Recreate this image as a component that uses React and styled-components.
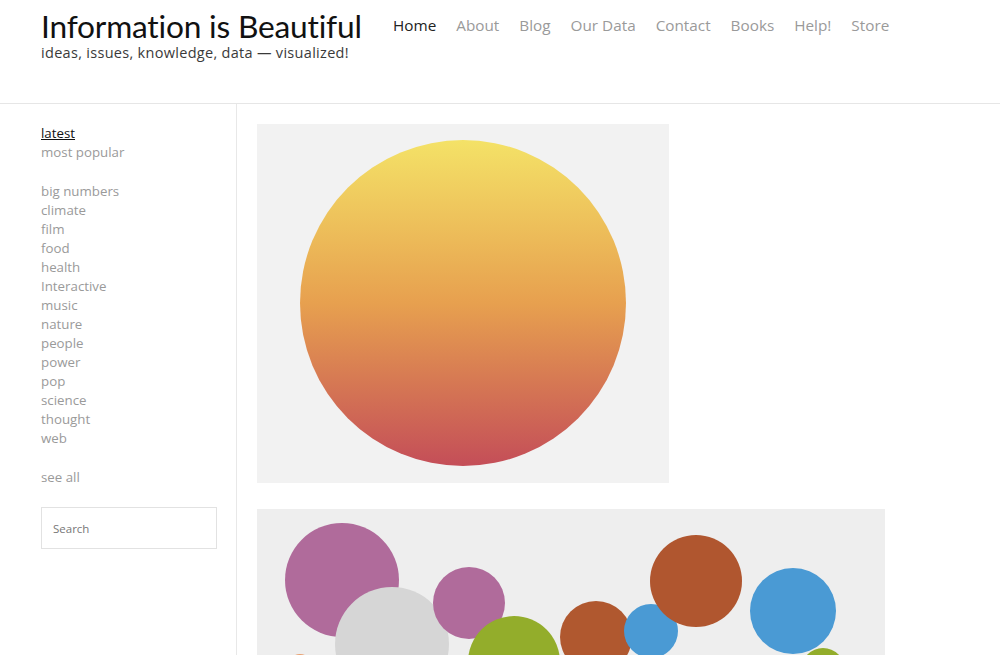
import React from "react";
import styled, { createGlobalStyle } from "styled-components";

const GlobalStyle = createGlobalStyle`
  body {
    margin: 0;
    background: #fff;
    font-family: Lato, "Open Sans", sans-serif;
  }
`;

const Page = styled.div`
  width: 1000px;
  height: 655px;
  overflow: hidden;
`;

const Header = styled.header`
  height: 104px;
  border-bottom: 1px solid #e6e6e6;
  display: flex;
  align-items: flex-start;
  padding-left: 41px;
  box-sizing: border-box;
`;

const Brand = styled.div`
  padding-top: 8px;
  width: 352px;
`;

const Title = styled.h1`
  margin: 0;
  font-family: Lato, sans-serif;
  font-weight: 400;
  font-size: 31.7px;
  line-height: 36px;
  letter-spacing: -0.2px;
  color: #111;
`;

const Tagline = styled.div`
  font-family: "Open Sans", sans-serif;
  font-size: 14.5px;
  line-height: 18px;
  color: #3a3a3a;
  letter-spacing: 0.3px;
`;

const Nav = styled.nav`
  display: flex;
  gap: 20px;
  padding-top: 14px;
`;

const NavLink = styled.a`
  font-family: "Open Sans", sans-serif;
  font-size: 15.3px;
  line-height: 22px;
  color: ${(p) => (p.$active ? "#222" : "#9a9a9a")};
  text-decoration: none;
`;

const Body = styled.div`
  display: flex;
  height: 551px;
`;

const Sidebar = styled.aside`
  width: 237px;
  flex-shrink: 0;
  border-right: 1px solid #e8e8e8;
  padding: 20px 20px 0 41px;
  box-sizing: border-box;
`;

const LinkList = styled.ul`
  list-style: none;
  margin: 0 0 20px;
  padding: 0;
`;

const SideLink = styled.li`
  font-family: "Open Sans", sans-serif;
  font-size: 13.3px;
  line-height: 19px;
  color: ${(p) => (p.$active ? "#111" : "#9a9a9a")};
  text-decoration: ${(p) => (p.$active ? "underline" : "none")};
`;

const SearchBox = styled.input`
  display: block;
  width: 176px;
  height: 42px;
  box-sizing: border-box;
  border: 1px solid #e2e2e2;
  padding: 0 11px;
  margin: 0;
  font-family: "Open Sans", sans-serif;
  font-size: 11.5px;
  color: #666;
  outline: none;
  &::placeholder {
    color: #777;
  }
`;

const Main = styled.main`
  padding: 20px 0 0 20px;
  display: flex;
  flex-direction: column;
  gap: 26px;
`;

const Tile = styled.div`
  width: ${(p) => p.$w}px;
  height: ${(p) => p.$h}px;
  background: ${(p) => p.$bg};
  flex-shrink: 0;
  overflow: hidden;
`;

const categories = [
  "big numbers", "climate", "film", "food", "health", "Interactive", "music",
  "nature", "people", "power", "pop", "science", "thought", "web",
];

const navItems = ["Home", "About", "Blog", "Our Data", "Contact", "Books", "Help!", "Store"];

const bubbles = [
  { cx: 43, cy: 157, r: 12, c: "#e8a070" },
  { cx: 85, cy: 71, r: 57, c: "#b06b9b" },
  { cx: 135, cy: 135, r: 57, c: "#d6d6d6" },
  { cx: 212, cy: 94, r: 36, c: "#b06b9b" },
  { cx: 257, cy: 153, r: 46, c: "#93ad2b" },
  { cx: 339, cy: 128, r: 36, c: "#b0582f" },
  { cx: 394, cy: 122, r: 27, c: "#4a9ad4" },
  { cx: 439, cy: 72, r: 46, c: "#b0562f" },
  { cx: 536, cy: 102, r: 43, c: "#4a9ad4" },
  { cx: 566, cy: 161, r: 22, c: "#93ad2b" },
];

const SunArt = () => (
  <svg width="412" height="359" viewBox="0 0 412 359">
    <defs>
      <linearGradient id="sun" x1="0" y1="0" x2="0" y2="1">
        <stop offset="0" stopColor="#f4e267" />
        <stop offset="0.5" stopColor="#e7a04f" />
        <stop offset="1" stopColor="#c44e58" />
      </linearGradient>
    </defs>
    <circle cx="206" cy="179" r="163" fill="url(#sun)" />
  </svg>
);

const BubbleArt = () => (
  <svg width="628" height="146" viewBox="0 0 628 146">
    {bubbles.map((b, i) => (
      <circle key={i} cx={b.cx} cy={b.cy} r={b.r} fill={b.c} />
    ))}
  </svg>
);

export default function App() {
  return (
    <>
      <GlobalStyle />
      <Page>
        <Header>
          <Brand>
            <Title>Information is Beautiful</Title>
            <Tagline>ideas, issues, knowledge, data — visualized!</Tagline>
          </Brand>
          <Nav>
            {navItems.map((n) => (
              <NavLink key={n} $active={n === "Home"}>{n}</NavLink>
            ))}
          </Nav>
        </Header>
        <Body>
          <Sidebar>
            <LinkList>
              <SideLink $active>latest</SideLink>
              <SideLink>most popular</SideLink>
            </LinkList>
            <LinkList>
              {categories.map((c) => (
                <SideLink key={c}>{c}</SideLink>
              ))}
            </LinkList>
            <LinkList>
              <SideLink>see all</SideLink>
            </LinkList>
            <SearchBox placeholder="Search" />
          </Sidebar>
          <Main>
            <Tile $w={412} $h={359} $bg="#f2f2f2">
              <SunArt />
            </Tile>
            <Tile $w={628} $h={160} $bg="#eeeeee">
              <BubbleArt />
            </Tile>
          </Main>
        </Body>
      </Page>
    </>
  );
}
